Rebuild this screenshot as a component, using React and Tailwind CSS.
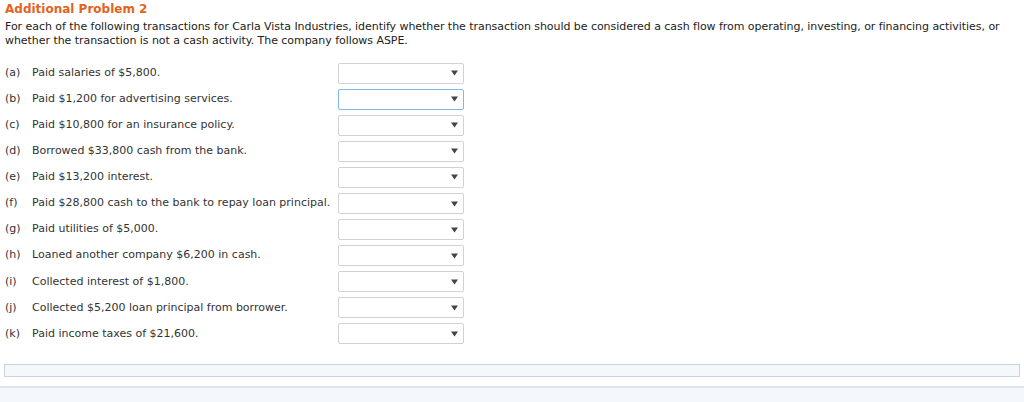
const items = [
  ['(a)', 'Paid salaries of $5,800.'],
  ['(b)', 'Paid $1,200 for advertising services.'],
  ['(c)', 'Paid $10,800 for an insurance policy.'],
  ['(d)', 'Borrowed $33,800 cash from the bank.'],
  ['(e)', 'Paid $13,200 interest.'],
  ['(f)', 'Paid $28,800 cash to the bank to repay loan principal.'],
  ['(g)', 'Paid utilities of $5,000.'],
  ['(h)', 'Loaned another company $6,200 in cash.'],
  ['(i)', 'Collected interest of $1,800.'],
  ['(j)', 'Collected $5,200 loan principal from borrower.'],
  ['(k)', 'Paid income taxes of $21,600.'],
]

function Select({ focused }) {
  return (
    <div
      className={`w-[126px] h-[21px] rounded-[2px] bg-white flex items-center justify-end pr-[5px] border ${
        focused ? 'border-[#7fb7ea]' : 'border-[#d2d2d2]'
      }`}
    >
      <svg width="7" height="6" viewBox="0 0 7 6">
        <path d="M0 0.5 H7 L3.5 5.5 Z" fill="#444" />
      </svg>
    </div>
  )
}

export default function App() {
  return (
    <div className="w-[1024px] h-[402px] bg-white overflow-hidden font-['DejaVu_Sans','Verdana',sans-serif] text-[#333]">
      <div className="pl-[5px] pt-[2px]">
        <h1 className="text-[12px] leading-[15px] font-bold text-[#e2641c]">Additional Problem 2</h1>
        <p className="text-[11px] leading-[14px] mt-[3px] pr-[10px] tracking-[-0.05px] text-[#222]">
          For each of the following transactions for Carla Vista Industries, identify whether the transaction should be considered a cash flow from operating, investing, or financing activities, or whether the transaction is not a cash activity. The company follows ASPE.
        </p>
        <div className="mt-[12px] flex flex-col">
          {items.map(([letter, text], i) => (
            <div key={letter} className="flex items-center h-[26.1px]">
              <span className="w-[27px] text-[11px]">{letter}</span>
              <span className="w-[306px] text-[11px]">{text}</span>
              <Select focused={i === 1} />
            </div>
          ))}
        </div>
      </div>
      <div className="mx-[4px] mt-[17px] h-[13px] border border-[#c9d3df] bg-[#f5f8fb]" />
      <div className="mt-[9px] h-[20px] border-t-2 border-[#dde5ee] bg-[#f4f7fb]" />
    </div>
  )
}
